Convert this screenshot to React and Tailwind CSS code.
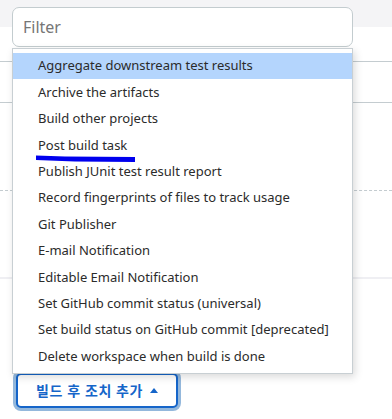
export default function App() {
  const items = [
    "Aggregate downstream test results",
    "Archive the artifacts",
    "Build other projects",
    "Post build task",
    "Publish JUnit test result report",
    "Record fingerprints of files to track usage",
    "Git Publisher",
    "E-mail Notification",
    "Editable Email Notification",
    "Set GitHub commit status (universal)",
    "Set build status on GitHub commit [deprecated]",
    "Delete workspace when build is done",
  ];

  return (
    <div
      className="relative w-[392px] h-[419px] overflow-hidden bg-white"
      style={{ fontFamily: '"Noto Sans", "Noto Sans CJK KR", sans-serif' }}
    >
      {/* page behind the dropdown */}
      <div className="h-[27px] bg-[#f4f4f6]" />
      <div className="h-[34px]" />
      <div className="h-[41px] border-t border-[#c4ccd0]" />
      <div className="h-[88px] border-t border-[#c4ccd0]" />
      <div className="h-[87px] border-t border-dashed border-[#c4ccd0]" />
      <div className="h-[96px] border-t-2 border-[#efeff3]" />

      <div className="pl-[16px]">
        <button className="flex items-center gap-[7px] h-[35px] pl-[18px] pr-[18px] rounded-[5px] border-2 border-[#1565c9] text-[#1565c9] text-[14px] font-semibold ring-[3px] ring-[#94b8dc] bg-white">
          <span className="tracking-[0.6px]">빌드 후 조치 추가</span>
          <svg width="8" height="5" viewBox="0 0 8 5">
            <path d="M0 5 L4 0 L8 5 Z" fill="#1565c9" />
          </svg>
        </button>
      </div>

      {/* dropdown overlay */}
      <div className="absolute left-[12px] top-[7px] w-[341px]">
        <div className="h-[40px] rounded-[7px] border-[1.5px] border-[#c3cccf] bg-white flex items-center px-[10px] text-[16px] text-[#767676]">
          Filter
        </div>
        <div className="relative mt-[1px] border border-[#c8cfd3] bg-white pt-[4px] pb-[3px] shadow-[2px_3px_8px_rgba(0,0,0,0.15)]">
          {items.map((t, i) => (
            <div
              key={t}
              className={`h-[26.4px] flex items-center pl-[25px] text-[13px] text-[#2b2b2b] ${
                i === 0 ? "bg-[#b4d5fd]" : ""
              }`}
            >
              {t}
            </div>
          ))}
          <svg className="absolute left-[22px] top-[105px]" width="104" height="9" viewBox="0 0 104 9">
            <path d="M1 1.5 L30 2.5 L100 3 L100 8 L40 7.5 L1 6 Z" fill="#0000ee" />
          </svg>
        </div>
      </div>
    </div>
  );
}
